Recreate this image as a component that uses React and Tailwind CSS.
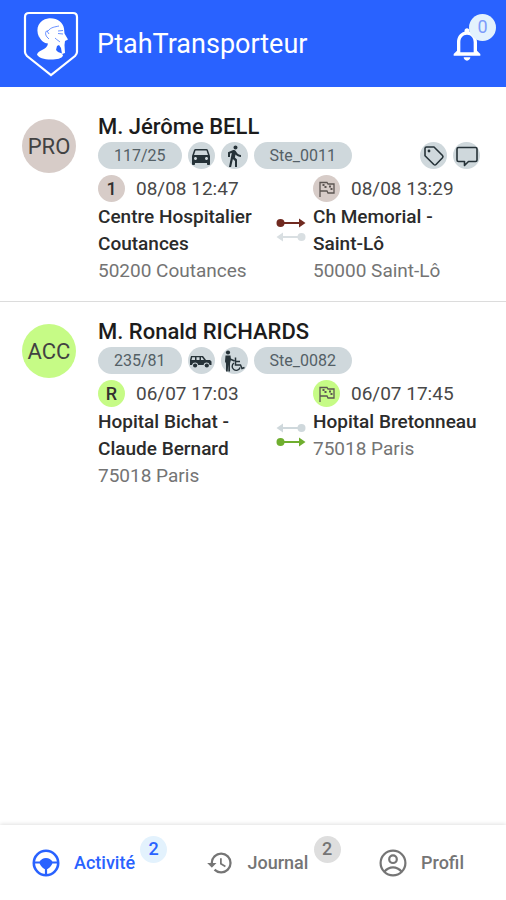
import { MdDirectionsCar, MdDirectionsWalk, MdNotificationsNone, MdHistory } from "react-icons/md";
import clsx from "clsx";

const transports = [
  {
    id: 1,
    type: "PRO",
    patient: "M. Jérôme BELL",
    numero: "117/25",
    societe: "Ste_0011",
    vehicule: "vsl",
    mobilite: "marche",
    notes: true,
    sens: "aller",
    etape: "1",
    depart: { heure: "08/08 12:47", lignes: ["Centre Hospitalier", "Coutances"], ville: "50200 Coutances" },
    arrivee: { heure: "08/08 13:29", lignes: ["Ch Memorial -", "Saint-Lô"], ville: "50000 Saint-Lô" },
  },
  {
    id: 2,
    type: "ACC",
    patient: "M. Ronald RICHARDS",
    numero: "235/81",
    societe: "Ste_0082",
    vehicule: "tpmr",
    mobilite: "fauteuil",
    notes: false,
    sens: "retour",
    etape: "R",
    depart: { heure: "06/07 17:03", lignes: ["Hopital Bichat -", "Claude Bernard"], ville: "75018 Paris" },
    arrivee: { heure: "06/07 17:45", lignes: ["Hopital Bretonneau"], ville: "75018 Paris" },
  },
];

const couleurs = {
  PRO: "bg-[#d7ccc8]",
  ACC: "bg-[#c6fb86]",
};

function Logo() {
  return (
    <svg viewBox="0 0 58 68" className="h-[68px] w-[58px] shrink-0" fill="none" aria-hidden="true">
      <path d="M7 3h44q4 0 4 4v35q0 2-2 4L29 65 5 46q-2-2-2-4V7q0-4 4-4Z" stroke="#fff" strokeWidth="2.200" />
      <path
        d="M17 27C13 18 17 10 26 8.500c9-1 15 4 16 10l.500 5 3.500 6-3 1.500-.500 4 .500 8-3 1-1-6-2-3-2 1-1 4 2 2 4 1.500 1 2c-1 3-6 4-12 4-7 0-13-2-14-5 1-5 10-4 11-11-4 0-7-3-9-7Z"
        fill="#fff"
      />
      <path d="M37 16c-4 1-8 1-11 5-3-1-3 4-1 6l2 2m-2-8 2 3m9-3 5-.500m-5 3 5 .500m-8 4c2 2 4 3 5 4" stroke="#2962ff" strokeWidth="0.700" />
    </svg>
  );
}

function IconVolant() {
  return (
    <svg viewBox="0 0 28 28" className="size-7" fill="none" stroke="currentColor" aria-hidden="true">
      <circle cx="14" cy="14" r="12.200" strokeWidth="2.600" />
      <path d="M2 13.500h24M14 17v9" strokeWidth="2.200" />
      <path d="M7.500 13c1.500-2.500 3.500-4 6.500-4s5 1.500 6.500 4c0 3-2.500 5.500-5 7h-3c-2.500-1.500-5-4-5-7Z" fill="currentColor" stroke="none" />
    </svg>
  );
}

function IconProfil() {
  return (
    <svg viewBox="0 0 28 28" className="size-7" fill="none" stroke="currentColor" strokeWidth="2.200" aria-hidden="true">
      <circle cx="14" cy="14" r="12.400" />
      <circle cx="14" cy="10.200" r="3.800" />
      <path d="M5.500 22.500C8 19.500 11 18.300 14 18.300s6 1.200 8.500 4.200" />
    </svg>
  );
}

function IconJeep() {
  return (
    <svg viewBox="0 0 24 24" className="size-6" fill="currentColor" aria-hidden="true">
      <path
        fillRule="evenodd"
        d="M2 7h12l3 4h4l1.500 1.500V16h-1.800a3.200 3.200 0 0 0-6.200 0H9.200a3.200 3.200 0 0 0-6.200 0H1V11Zm1.200 1.200L2.500 11H6V8.200Zm4.300 0V11h3V8.200Zm4.500 0V11h3l-2-2.800Z"
      />
      <circle cx="6.100" cy="16.500" r="2.100" />
      <circle cx="17.800" cy="16.500" r="2.100" />
    </svg>
  );
}

function IconFauteuil() {
  return (
    <svg viewBox="0 0 24 24" className="size-6" fill="none" stroke="currentColor" aria-hidden="true">
      <circle cx="6" cy="3.500" r="2.100" fill="currentColor" stroke="none" />
      <path d="M3.500 6.500h5l.500 4-1 4v8H6.300v-7l-.600 7H4v-8l-1-2Z" fill="currentColor" stroke="none" />
      <path d="M8 10l4.500 2M13.500 8.500V16h5l1.500 3.500 2.500-1" strokeWidth="1.500" />
      <path d="M12 14a4 4 0 1 0 6 4.500M14 12.500h4" strokeWidth="1.400" />
    </svg>
  );
}

function IconTag() {
  return (
    <svg viewBox="0 0 24 24" className="size-6" fill="none" stroke="currentColor" strokeWidth="1.600" strokeLinejoin="round" aria-hidden="true">
      <path d="M3 4.500Q3 3 4.500 3H12L20.500 11.500Q21.500 12.700 20.500 13.800L14 20.500Q13 21.500 11.800 20.500L3 11.800Z" />
      <circle cx="7" cy="7" r="1.400" fill="currentColor" stroke="none" />
    </svg>
  );
}

function IconMessage() {
  return (
    <svg viewBox="0 0 24 24" className="size-6" fill="none" stroke="currentColor" strokeWidth="1.600" strokeLinejoin="round" aria-hidden="true">
      <path d="M3.500 3.500h17Q22 3.500 22 5v11Q22 17.500 20.500 17.500H13.500L9.500 21.500V17.500H3.500Q2 17.500 2 16V5Q2 3.500 3.500 3.500Z" />
    </svg>
  );
}

function IconDrapeau() {
  return (
    <svg viewBox="0 0 20 20" className="size-5" fill="none" stroke="currentColor" strokeWidth="1.300" aria-hidden="true">
      <path d="M3 18V3.500h7l1 1.500h6V14h-6l-1-2H3" />
      <path d="M5.500 5h2v2h-2zM7.500 7h2v2h-2zM12 6.500h2v2h-2zM13.500 9h2v2h-2z" fill="currentColor" stroke="none" />
    </svg>
  );
}

function Fleche({ retour, className }) {
  return (
    <svg viewBox="0 0 30 10" className={clsx("h-2.5 w-[30px]", retour && "rotate-180", className)} fill="currentColor" aria-hidden="true">
      <circle cx="4.500" cy="5" r="4" />
      <path d="M4 4h19V0.500l6.500 4.500-6.500 4.500V6H4Z" />
    </svg>
  );
}

function Pastille({ className = "bg-[#cfd8dc] text-[#263238]", children }) {
  return (
    <span className={clsx("flex size-[27px] shrink-0 items-center justify-center rounded-full", className)}>
      {children}
    </span>
  );
}

function Chip({ children }) {
  return (
    <span className="flex h-[27px] items-center rounded-full bg-[#cfd8dc] px-4 text-base text-[#546066]">
      {children}
    </span>
  );
}

function Lieu({ lieu, couleur, pastille, className }) {
  return (
    <div className={clsx("min-w-0", className)}>
      <div className="mb-px flex items-center gap-[11px] text-[19px] leading-[27px] text-[#484848]">
        <Pastille className={couleur}>{pastille}</Pastille>
        <span className="whitespace-nowrap">{lieu.heure}</span>
      </div>
      <div className="text-[19px] leading-[27px]">
        {lieu.lignes.map((ligne) => (
          <p key={ligne} className="font-medium whitespace-nowrap text-[#2b2b2b]">{ligne}</p>
        ))}
        <p className="text-[#747474]">{lieu.ville}</p>
      </div>
    </div>
  );
}

function Transport({ transport }) {
  const couleur = couleurs[transport.type];
  const aller = transport.sens === "aller";

  return (
    <li className="flex border-b border-[#dcdcdc] px-[22px] pt-4 pb-[17px] last:border-b-0">
      <div className={clsx("mt-[6px] mr-[22px] flex size-[54px] shrink-0 items-center justify-center rounded-full text-[22px] text-[#424242]", couleur)}>
        {transport.type}
      </div>

      <div className="min-w-0 flex-1">
        <h2 className="text-[22px] leading-[27px] font-medium text-[#1c1c1c]">{transport.patient}</h2>

        <div className="mt-0.5 flex items-center gap-1.5">
          <Chip>{transport.numero}</Chip>
          <Pastille>
            {transport.vehicule === "vsl" ? <MdDirectionsCar className="size-6" /> : <IconJeep />}
          </Pastille>
          <Pastille>
            {transport.mobilite === "marche" ? <MdDirectionsWalk className="size-6" /> : <IconFauteuil />}
          </Pastille>
          <Chip>{transport.societe}</Chip>
          {transport.notes && (
            <div className="ml-auto flex gap-1.5 pr-1">
              <button type="button" aria-label="Étiquettes">
                <Pastille><IconTag /></Pastille>
              </button>
              <button type="button" aria-label="Messages">
                <Pastille><IconMessage /></Pastille>
              </button>
            </div>
          )}
        </div>

        <div className="mt-1.5 flex">
          <Lieu
            className="flex-1"
            lieu={transport.depart}
            couleur={couleur}
            pastille={<b className="text-lg font-medium text-[#33302f]">{transport.etape}</b>}
          />
          <div className="mt-[43px] mr-[7px] flex shrink-0 flex-col gap-1">
            <Fleche retour={!aller} className={aller ? "text-[#702a20]" : "text-[#cfd8dc]"} />
            <Fleche retour={aller} className={aller ? "text-[#d9dfe2]" : "text-[#6fae2f]"} />
          </div>
          <Lieu
            className="w-[171px]"
            lieu={transport.arrivee}
            couleur={couleur}
            pastille={<span className="text-[#5c5552]"><IconDrapeau /></span>}
          />
        </div>
      </div>
    </li>
  );
}

function Onglet({ icon, label, badge, actif }) {
  return (
    <button
      type="button"
      className={clsx("flex items-center gap-3.5 text-lg font-medium", actif ? "text-[#2962ff]" : "text-[#757575]")}
    >
      {icon}
      <span className={clsx("relative text-left", badge && "min-w-[66px]")}>
        {label}
        {badge && (
          <span
            className={clsx(
              "absolute -top-[13px] left-full flex size-[27px] items-center justify-center rounded-full",
              actif ? "bg-[#e3f2fd]" : "bg-[#dedede]"
            )}
          >
            {badge}
          </span>
        )}
      </span>
    </button>
  );
}

export default function App() {
  return (
    <div className="flex min-h-screen flex-col bg-white font-['Roboto',sans-serif]">
      {/* HEADER */}
      <header className="flex h-[87px] items-center bg-[#2962ff] px-[22px] text-white">
        <Logo />
        <h1 className="ml-[17px] pt-0.5 text-[27px]">PtahTransporteur</h1>
        <button type="button" aria-label="Notifications" className="relative mr-[-3px] ml-auto">
          <MdNotificationsNone className="size-10" />
          <span className="absolute -top-[10px] -right-[9px] flex size-[27px] items-center justify-center rounded-full bg-[#e3f2fd] text-lg text-[#7d9cfa]">
            0
          </span>
        </button>
      </header>

      {/* LISTE */}
      <main className="flex-1 pt-2.5">
        <ul>
          {transports.map((transport) => (
            <Transport key={transport.id} transport={transport} />
          ))}
        </ul>
      </main>

      {/* NAVIGATION */}
      <nav className="flex h-[75px] items-center justify-between pr-[42px] pl-8 shadow-[0_-1px_4px_rgba(0,0,0,0.12)]">
        <Onglet icon={<IconVolant />} label="Activité" badge="2" actif />
        <Onglet icon={<MdHistory className="size-7" />} label="Journal" badge="2" />
        <Onglet icon={<IconProfil />} label="Profil" />
      </nav>
    </div>
  );
}
